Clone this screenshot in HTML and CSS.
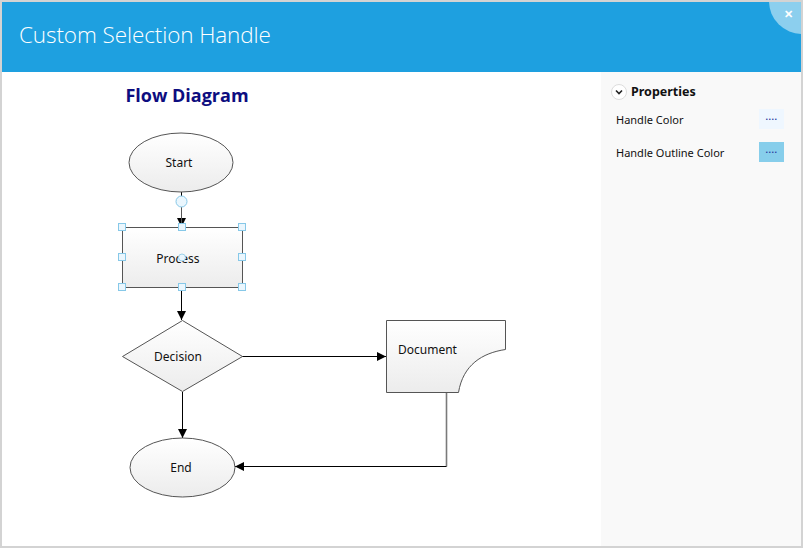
FILE: index.html
```html
<!DOCTYPE html>
<html>
<head>
  <meta charset="UTF-8">
  <title>Custom Selection Handle</title>
  <link rel="stylesheet" href="styles.css">
</head>
<body>
  <div class="window">
    <div class="header">
      <h1>Custom Selection Handle</h1>
      <div class="close">&#x2715;</div>
    </div>
    <div class="content">
      <div class="canvas">
        <!-- viewBox uses page coordinates so nodes read as placed on screen -->
        <svg class="diagram" width="599" height="474" viewBox="2 72 599 474">
          <defs>
            <linearGradient id="fill" x1="0" y1="0" x2="0" y2="1">
              <stop offset="0" stop-color="#ffffff"/>
              <stop offset="1" stop-color="#ececec"/>
            </linearGradient>
            <marker id="arrow" viewBox="0 0 10 10" refX="10" refY="5" markerWidth="9" markerHeight="9" markerUnits="userSpaceOnUse" orient="auto">
              <path d="M0,0 L10,5 L0,10 z" fill="#000"/>
            </marker>
          </defs>

          <text class="title" x="187" y="102" text-anchor="middle">Flow Diagram</text>

          <!-- connectors -->
          <line class="conn" x1="181.5" y1="192" x2="181.5" y2="227" marker-end="url(#arrow)"/>
          <line class="conn" x1="181.5" y1="287" x2="181.5" y2="320" marker-end="url(#arrow)"/>
          <line class="conn" x1="182.5" y1="392" x2="182.5" y2="438" marker-end="url(#arrow)"/>
          <line class="conn" x1="242" y1="356.5" x2="386" y2="356.5" marker-end="url(#arrow)"/>
          <line class="conn gray" x1="446.5" y1="392" x2="446.5" y2="466.5"/>
          <line class="conn" x1="446.5" y1="466.5" x2="235" y2="466.5" marker-end="url(#arrow)"/>

          <!-- nodes -->
          <ellipse class="node" cx="181" cy="162.5" rx="52" ry="29.5"/>
          <text class="label" x="179" y="167" text-anchor="middle">Start</text>

          <rect class="node" x="122.5" y="227.5" width="120" height="60"/>
          <text class="label" x="178" y="263" text-anchor="middle">Process</text>

          <polygon class="node" points="122.5,356.5 182.5,320.5 242.5,356.5 182.5,391.5"/>
          <text class="label" x="178" y="361" text-anchor="middle">Decision</text>

          <ellipse class="node" cx="182.5" cy="467.5" rx="52.5" ry="29.5"/>
          <text class="label" x="181" y="472" text-anchor="middle">End</text>

          <path class="node" d="M386.5,320.5 H505.5 V349.5 C482,353 463,365 458.5,392.5 H386.5 Z"/>
          <text class="label" x="398" y="354">Document</text>

          <!-- selection handles on Process -->
          <line class="handle-line" x1="181.5" y1="207" x2="181.5" y2="224"/>
          <circle class="handle" cx="181.5" cy="201.5" r="5.5"/>
          <circle class="pivot" cx="182" cy="257.5" r="3.5"/>
          <rect class="handle" x="118.5" y="223.5" width="7" height="7"/>
          <rect class="handle" x="178.5" y="223.5" width="7" height="7"/>
          <rect class="handle" x="238.5" y="223.5" width="7" height="7"/>
          <rect class="handle" x="118.5" y="253.5" width="7" height="7"/>
          <rect class="handle" x="238.5" y="253.5" width="7" height="7"/>
          <rect class="handle" x="118.5" y="283.5" width="7" height="7"/>
          <rect class="handle" x="178.5" y="283.5" width="7" height="7"/>
          <rect class="handle" x="238.5" y="283.5" width="7" height="7"/>
        </svg>
      </div>
      <div class="panel">
        <div class="panel-head">
          <span class="chevron">
            <svg width="10" height="10" viewBox="0 0 10 10"><path d="M2,3.5 L5,6.5 L8,3.5" fill="none" stroke="#222" stroke-width="1.6"/></svg>
          </span>
          <span>Properties</span>
        </div>
        <div class="prop">
          <span>Handle Color</span>
          <button class="pick pick-light">....</button>
        </div>
        <div class="prop">
          <span>Handle Outline Color</span>
          <button class="pick pick-sky">....</button>
        </div>
      </div>
    </div>
  </div>
</body>
</html>
```
FILE: styles.css
```css
body { margin: 0; font-family: "Noto Sans", "Open Sans", sans-serif; background: #fff; }
.window { width: 799px; height: 544px; border: 2px solid #d3d3d3; display: flex; flex-direction: column; overflow: hidden; position: relative; }
.header { height: 70px; background: #1ea0e0; display: flex; align-items: center; position: relative; overflow: hidden; flex-shrink: 0; box-sizing: border-box; padding-bottom: 6px; }
.header h1 { margin: 0 0 0 17px; color: #fff; font-family: "Open Sans", "Noto Sans", sans-serif; font-weight: 300; font-size: 22.5px; letter-spacing: -0.1px; }
.close { position: absolute; right: -34px; top: -34px; width: 66px; height: 66px; border-radius: 50%; background: #8ccfee; color: #fff; font-size: 11px; font-weight: bold; }
.close { box-sizing: border-box; padding: 40px 0 0 15px; line-height: 1; }
.content { flex: 1; display: flex; }
.canvas { width: 599px; background: #fff; }
.diagram { display: block; }
.panel { flex: 1; background: #f9f9f9; padding: 11px 17px 0 10px; }
.panel-head { display: flex; align-items: center; gap: 4px; font-weight: bold; font-size: 12.5px; color: #111; }
.chevron { width: 14px; height: 14px; border-radius: 50%; border: 1px solid #ddd; background: #fff; display: flex; align-items: center; justify-content: center; }
.prop { display: flex; justify-content: space-between; align-items: center; font-size: 11px; color: #111; margin-top: 9px; padding-left: 5px; }
.prop + .prop { margin-top: 13px; }
.pick { width: 25px; height: 20px; border: none; padding: 0 0 4px; font-size: 9px; color: #2a3aa0; font-weight: bold; letter-spacing: 0.5px; }
.pick-light { background: #eff7ff; }
.pick-sky { background: #87ceeb; }
.title { font-family: "Open Sans", "Noto Sans", sans-serif; font-weight: bold; font-size: 18px; fill: #0d0d80; }
.label { font-size: 12px; fill: #111; }
.node { fill: url(#fill); stroke: #555; stroke-width: 1; }
.conn { stroke: #000; stroke-width: 1; }
.conn.gray { stroke: #7a7a7a; stroke-width: 1.6; }
.handle { fill: #eaf6fd; stroke: #86c8e8; stroke-width: 1; }
.handle-line { stroke: #555; stroke-width: 1; }
.pivot { fill: #eaf6fd; stroke: #9bd0ea; stroke-width: 1; }
```
